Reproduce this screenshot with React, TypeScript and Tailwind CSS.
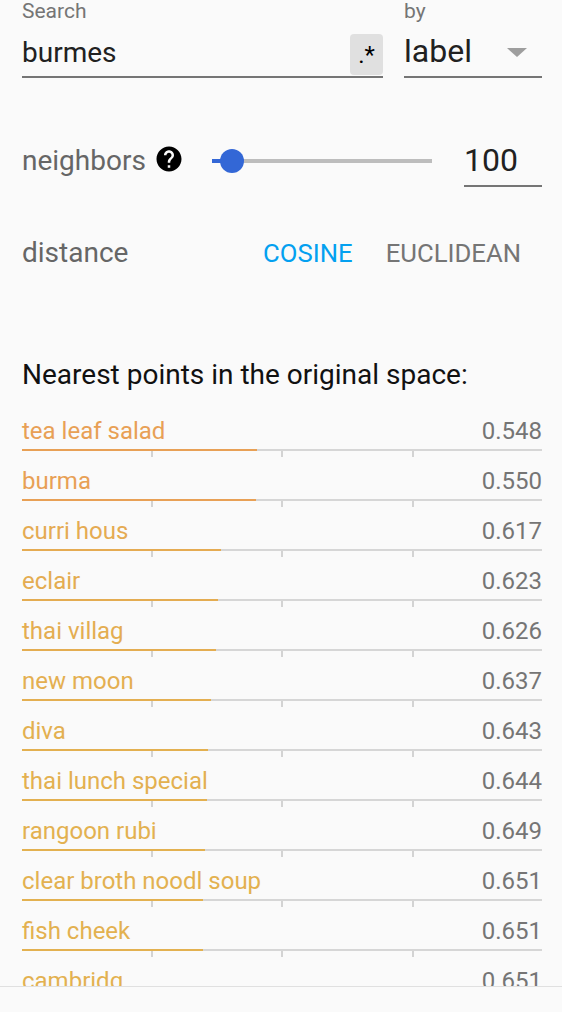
const neighbors = [
  { label: "tea leaf salad", value: 0.548 },
  { label: "burma", value: 0.55 },
  { label: "curri hous", value: 0.617 },
  { label: "eclair", value: 0.623 },
  { label: "thai villag", value: 0.626 },
  { label: "new moon", value: 0.637 },
  { label: "diva", value: 0.643 },
  { label: "thai lunch special", value: 0.644 },
  { label: "rangoon rubi", value: 0.649 },
  { label: "clear broth noodl soup", value: 0.651 },
  { label: "fish cheek", value: 0.651 },
  { label: "cambridg", value: 0.651 },
];

// orange -> yellow-ish as distance grows
const rowColor = (v: number) => {
  const t = Math.min(1, Math.max(0, (v - 0.548) / (0.651 - 0.548)));
  const r = Math.round(232 + (227 - 232) * t);
  const g = Math.round(160 + (177 - 160) * t);
  const b = Math.round(85 + (80 - 85) * t);
  return `rgb(${r},${g},${b})`;
};

const HelpIcon = () => (
  <svg viewBox="0 0 24 24" className="h-[30px] w-[30px] shrink-0 -mt-[4px]" fill="#000">
    <path d="M12 2C6.48 2 2 6.48 2 12s4.48 10 10 10 10-4.48 10-10S17.52 2 12 2zm1 17h-2v-2h2v2zm2.07-7.75l-.9.92C13.45 12.9 13 13.5 13 15h-2v-.5c0-1.1.45-2.1 1.17-2.83l1.24-1.26c.37-.36.59-.86.59-1.41 0-1.1-.9-2-2-2s-2 .9-2 2H8c0-2.21 1.79-4 4-4s4 1.79 4 4c0 .88-.36 1.68-.93 2.25z" />
  </svg>
);

const NeighborRow = ({ label, value }: { label: string; value: number }) => {
  const color = rowColor(value);
  return (
    <div className="flex h-[50px] flex-col">
      <div className="flex justify-between text-[24px] leading-[28px]">
        <span style={{ color }}>{label}</span>
        <span className="text-[#757575]">{value.toFixed(3)}</span>
      </div>
      <div className="relative mt-[4px] h-[2px] bg-[#d6d6d6]">
        <div className="h-[2px]" style={{ width: `${(1 - value) * 100}%`, backgroundColor: color }} />
      </div>
      <div className="flex h-[6px]">
        <div className="flex-1 border-r-2 border-[#d3d3d3]" />
        <div className="flex-1 border-r-2 border-[#d3d3d3]" />
        <div className="flex-1 border-r-2 border-[#d3d3d3]" />
        <div className="flex-1" />
      </div>
    </div>
  );
};

export default function App() {
  return (
    <div className="flex h-[1012px] w-[562px] flex-col overflow-hidden bg-[#fafafa] font-['Roboto',sans-serif]">
      <div className="flex-1 overflow-hidden pl-[22px] pr-[20px]">
        {/* search + by */}
        <div className="flex gap-[21px]">
          <div className="flex flex-1 flex-col">
            <div className="text-[21px] leading-[22px] text-[#757575]">Search</div>
            <div className="flex h-[56px] items-end justify-between border-b-2 border-[#757575]">
              <span className="pb-[7px] text-[28px] leading-[32px] text-[#212121]">burmes</span>
              <div className="mb-[1px] flex h-[41px] w-[33px] items-center justify-center rounded-[4px] bg-[#e0e0e0] text-[24px] leading-[24px] text-black">
                .*
              </div>
            </div>
          </div>
          <div className="flex w-[138px] flex-col">
            <div className="text-[21px] leading-[22px] text-[#757575]">by</div>
            <div className="flex h-[56px] items-end justify-between border-b-2 border-[#757575]">
              <span className="pb-[7px] text-[32px] leading-[36px] text-[#212121]">label</span>
              <div className="mb-[19px] mr-[15px] h-0 w-0 border-x-[10px] border-t-[9px] border-x-transparent border-t-[#9e9e9e]" />
            </div>
          </div>
        </div>

        {/* neighbors slider */}
        <div className="mt-[59px] flex h-[48px] items-center">
          <span className="text-[28px] leading-[32px] text-[#666]">neighbors</span>
          <div className="ml-[8px]">
            <HelpIcon />
          </div>
          <div className="relative ml-[28px] flex h-[24px] w-[220px] items-center">
            <div className="flex h-[4px] w-full bg-[#bdbdbd]">
              <div className="h-[4px] w-[20px] bg-[#3367d6]" />
            </div>
            <div className="absolute left-[8px] top-0 h-[24px] w-[24px] rounded-full bg-[#3367d6]" />
          </div>
          <div className="ml-auto mt-[7px] w-[78px] border-b-2 border-[#757575] pb-[7px] text-[32px] leading-[36px] text-[#212121]">
            100
          </div>
        </div>

        {/* distance */}
        <div className="mt-[52px] flex h-[32px] items-center">
          <span className="text-[28px] leading-[32px] text-[#666]">distance</span>
          <div className="ml-auto mr-[21px] flex items-center gap-[33px] text-[25.7px] leading-[32px]">
            <span className="text-[#03a0f0]">COSINE</span>
            <span className="text-[#757575]">EUCLIDEAN</span>
          </div>
        </div>

        <div className="mt-[90px] text-[28px] leading-[32px] text-[#111]">
          Nearest points in the original space:
        </div>

        <div className="mt-[26px] flex flex-col">
          {neighbors.map((n) => (
            <NeighborRow key={n.label} label={n.label} value={n.value} />
          ))}
        </div>
      </div>
      <div className="h-[26px] shrink-0 border-t border-[#e0e0e0]" />
    </div>
  );
}
